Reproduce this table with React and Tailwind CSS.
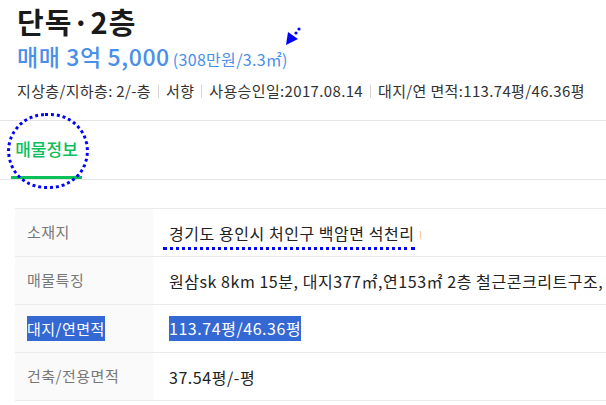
const font = { fontFamily: '"Noto Sans CJK KR", "Noto Sans", sans-serif' };

const rows = [
  { label: '소재지', value: '경기도 용인시 처인구 백암면 석천리', mark: true },
  { label: '매물특징', value: '원삼sk 8km 15분, 대지377㎡,연153㎡ 2층 철근콘크리트구조,' },
  { label: '대지/연면적', value: '113.74평/46.36평', selected: true },
  { label: '건축/전용면적', value: '37.54평/-평' },
];

const Sep = () => <span className="inline-block w-px h-[13px] bg-[#d5d5d5] mx-[7px] align-[-1px]" />;

const DetailRow = ({ label, value, mark, selected }) => (
  <div className="flex h-[48px] border-b border-[#ebebeb]">
    <div className="w-[138px] shrink-0 bg-[#fafafa] flex items-center pl-[12px] text-[15px] text-[#777] tracking-[0.5px]">
      {selected ? (
        <span className="bg-[#3468d2] text-white leading-[25px]">{label}</span>
      ) : (
        label
      )}
    </div>
    <div className="flex items-center pl-[16px] text-[16px] text-[#222] whitespace-nowrap tracking-[0.55px]">
      {selected ? (
        <span className="bg-[#3468d2] text-white leading-[25px]">{value}</span>
      ) : mark ? (
        <span className="relative">
          {value}
          <span className="inline-block w-px h-[8px] bg-[#f3c9a0] ml-[5px] align-middle" />
          <span className="absolute left-[-6px] right-[6px] top-[26px] border-b-[3px] border-dotted border-[#0000ff]" />
        </span>
      ) : (
        value
      )}
    </div>
  </div>
);

export default function App() {
  return (
    <div className="w-[606px] h-[405px] overflow-hidden bg-white relative" style={font}>
      <div className="px-[17px] pt-[2px]">
        <h1 className="text-[29px] font-bold text-[#1a1a1a] leading-[38px] tracking-[1px]">단독·2층</h1>
        <div className="flex items-baseline text-[#4a8fe8] mt-[1px]">
          <span className="text-[23px] font-medium leading-[30px] tracking-[0.6px]">매매 3억 5,000</span>
          <span className="text-[16px] ml-[3px] tracking-[0.3px]">(308만원/3.3㎡)</span>
        </div>
        <div className="text-[15px] text-[#333] mt-[10px] leading-[20px] whitespace-nowrap tracking-[0.35px]">
          지상층/지하층: 2/-층<Sep />서향<Sep />사용승인일:2017.08.14<Sep />대지/연 면적:113.74평/46.36평
        </div>
      </div>

      <div className="mt-[19px] border-t border-b border-[#e5e5e5] h-[60px] flex items-end">
        <div className="ml-[11px] w-[71px] h-full flex flex-col">
          <div className="flex-1 flex items-center justify-center text-[17px] text-[#0bbf5a] font-medium">매물정보</div>
          <div className="h-[3px] bg-[#0bbf5a]" />
        </div>
      </div>

      <div className="ml-[15px] mt-[28px] border-t border-[#ebebeb]">
        {rows.map((r) => (
          <DetailRow key={r.label} {...r} />
        ))}
      </div>

      {/* annotation overlays */}
      <div className="absolute left-[7px] top-[113px] w-[82px] h-[76px] rounded-full border-[3px] border-dotted border-[#0000ff]" />
      <svg className="absolute left-[282px] top-[18px]" width="24" height="32" viewBox="0 0 24 32">
        <polygon points="4,27 6,14 16,21" fill="#0000ff" />
        <circle cx="14" cy="15" r="1.6" fill="#0000ff" />
        <circle cx="17" cy="11" r="1.6" fill="#0000ff" />
      </svg>
    </div>
  );
}
